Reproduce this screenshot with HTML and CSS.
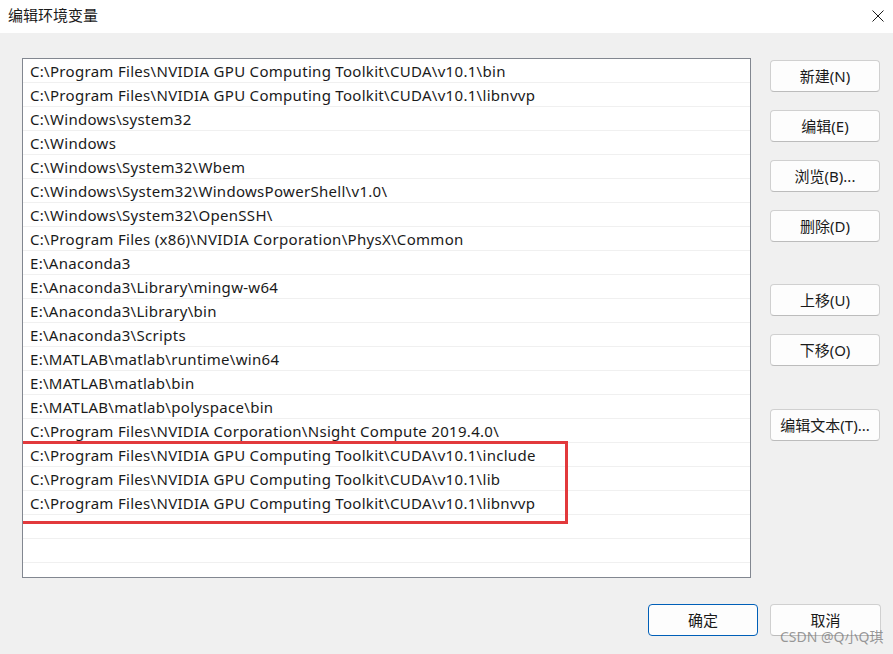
FILE: index.html
```html
<!DOCTYPE html>
<html>
<head>
<meta charset="utf-8">
<title>编辑环境变量</title>
<link rel="stylesheet" href="styles.css">
</head>
<body>
<div class="window">
  <div class="titlebar">
    <span class="title">编辑环境变量</span>
    <svg class="close" width="12" height="12" viewBox="0 0 12 12"><path d="M0.5 0.5 L11.5 11.5 M11.5 0.5 L0.5 11.5" stroke="#1b1b1b" stroke-width="1" fill="none"/></svg>
  </div>
  <div class="content">
    <div class="main">
      <div class="list">
        <div class="row">C:\Program Files\NVIDIA GPU Computing Toolkit\CUDA\v10.1\bin</div>
        <div class="row">C:\Program Files\NVIDIA GPU Computing Toolkit\CUDA\v10.1\libnvvp</div>
        <div class="row">C:\Windows\system32</div>
        <div class="row">C:\Windows</div>
        <div class="row">C:\Windows\System32\Wbem</div>
        <div class="row">C:\Windows\System32\WindowsPowerShell\v1.0\</div>
        <div class="row">C:\Windows\System32\OpenSSH\</div>
        <div class="row">C:\Program Files (x86)\NVIDIA Corporation\PhysX\Common</div>
        <div class="row">E:\Anaconda3</div>
        <div class="row">E:\Anaconda3\Library\mingw-w64</div>
        <div class="row">E:\Anaconda3\Library\bin</div>
        <div class="row">E:\Anaconda3\Scripts</div>
        <div class="row">E:\MATLAB\matlab\runtime\win64</div>
        <div class="row">E:\MATLAB\matlab\bin</div>
        <div class="row">E:\MATLAB\matlab\polyspace\bin</div>
        <div class="row">C:\Program Files\NVIDIA Corporation\Nsight Compute 2019.4.0\</div>
        <div class="row">C:\Program Files\NVIDIA GPU Computing Toolkit\CUDA\v10.1\include</div>
        <div class="row">C:\Program Files\NVIDIA GPU Computing Toolkit\CUDA\v10.1\lib</div>
        <div class="row">C:\Program Files\NVIDIA GPU Computing Toolkit\CUDA\v10.1\libnvvp</div>
        <div class="row"></div>
        <div class="row"></div>
        <div class="row"></div>
        <div class="highlight"></div>
      </div>
      <div class="side">
        <div class="group">
          <button class="btn">新建(N)</button>
          <button class="btn">编辑(E)</button>
          <button class="btn">浏览(B)...</button>
          <button class="btn">删除(D)</button>
        </div>
        <div class="group move">
          <button class="btn">上移(U)</button>
          <button class="btn">下移(O)</button>
        </div>
        <div class="group text">
          <button class="btn">编辑文本(T)...</button>
        </div>
      </div>
    </div>
    <div class="footer">
      <button class="btn primary">确定</button>
      <button class="btn cancel">取消</button>
    </div>
  </div>
  <div class="watermark">CSDN @Q小Q琪</div>
</div>
</body>
</html>
```
FILE: styles.css
```css
* { box-sizing: border-box; }
html, body { margin: 0; padding: 0; }
body {
  width: 893px;
  height: 654px;
  overflow: hidden;
  font-family: "Noto Sans", "Noto Sans CJK SC", sans-serif;
  color: #1a1a1a;
  background: #f0f0f0;
}
.window {
  position: relative;
  width: 893px;
  height: 654px;
}
.titlebar {
  height: 33px;
  background: #ffffff;
  display: flex;
  align-items: center;
  justify-content: space-between;
  padding: 0 9px 4px 8px;
}
.title {
  font-family: "Noto Sans CJK SC", sans-serif;
  font-size: 15px;
  color: #1a1a1a;
}
.close { display: block; margin-top: 2px; }
.content {
  padding: 25px 0 0 22px;
}
.main {
  display: flex;
  gap: 19px;
}
.list {
  position: relative;
  width: 729px;
  height: 520px;
  background: #ffffff;
  border: 1px solid #828790;
  overflow: hidden;
}
.row {
  height: 24px;
  border-bottom: 1px solid #f0f0f0;
  padding: 2px 0 0 7px;
  font-family: "Noto Sans", sans-serif;
  font-size: 15px;
  letter-spacing: 0.3px;
  line-height: 21px;
  white-space: nowrap;
  color: #1a1a1a;
}
.highlight {
  position: absolute;
  left: -6px;
  top: 382px;
  width: 551px;
  height: 83px;
  border: 3px solid #e2393c;
}
.side {
  display: flex;
  flex-direction: column;
  padding-top: 2px;
}
.group {
  display: flex;
  flex-direction: column;
  gap: 18px;
}
.group.move { margin-top: 42px; }
.group.text { margin-top: 43px; }
.btn {
  width: 110px;
  height: 32px;
  background: #fdfdfd;
  border: 1px solid #d0d0d0;
  border-bottom-color: #bcbcbc;
  border-radius: 4px;
  font-family: "Noto Sans", "Noto Sans CJK SC", sans-serif;
  font-size: 15px;
  color: #1a1a1a;
  padding: 0 0 2px 0;
}
.footer {
  display: flex;
  gap: 12px;
  padding-left: 626px;
  margin-top: 26px;
}
.btn.primary {
  border: 1px solid #005fb8;
  border-radius: 4px;
}
.btn.cancel { width: 111px; }
.watermark {
  position: absolute;
  left: 780px;
  top: 626px;
  font-family: "Noto Sans", "Noto Sans CJK SC", sans-serif;
  font-size: 14px;
  color: rgba(120, 120, 120, 0.75);
}
```
